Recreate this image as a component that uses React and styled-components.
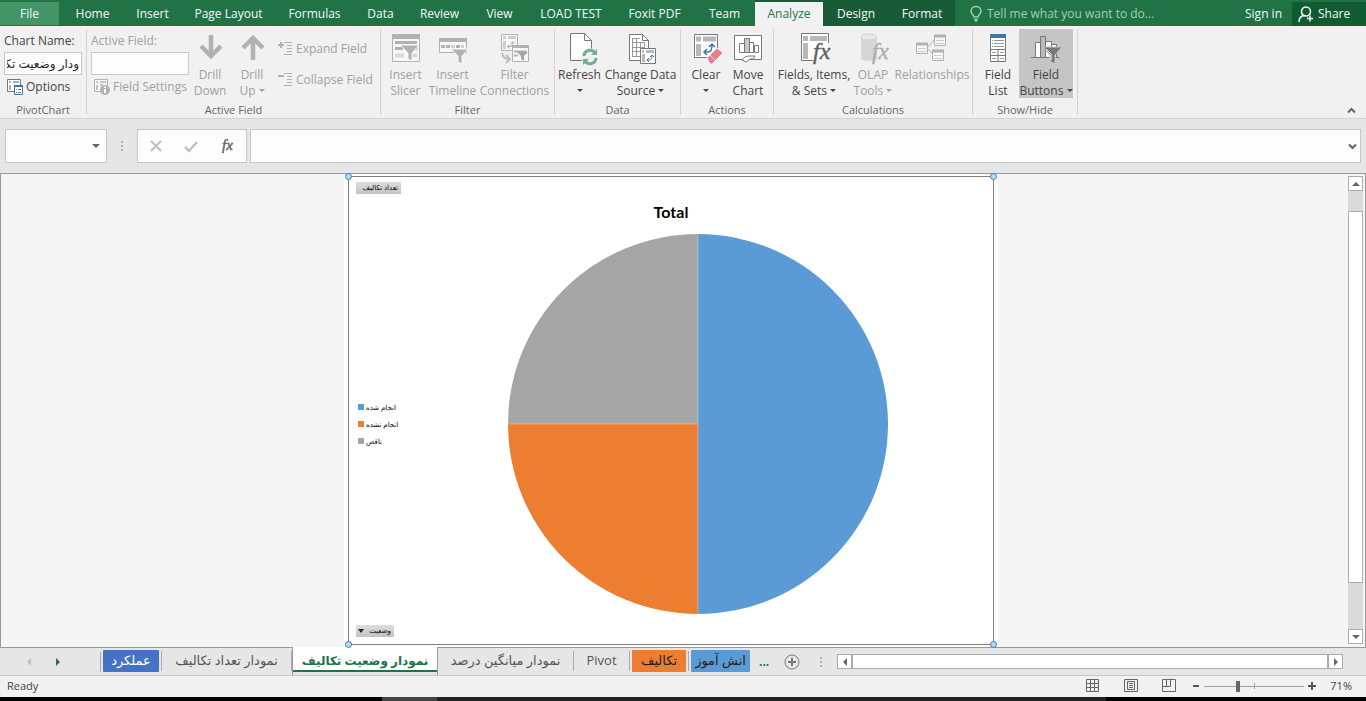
import styled, { createGlobalStyle } from 'styled-components';

const GlobalStyle = createGlobalStyle`
  * {
    box-sizing: border-box;
  }

  body {
    margin: 0;
    font-family: 'Open Sans', 'DejaVu Sans', sans-serif;
    font-size: 12px;
    line-height: 16px;
    color: #444;
  }

  button, input {
    margin: 0;
    padding: 0;
    border: 0;
    background: none;
    font: inherit;
    color: inherit;
  }

  svg {
    display: block;
    flex: none;
    overflow: visible;
  }
`;

const Page = styled.div`
  display: flex;
  flex-direction: column;
  min-height: 100vh;
  background-color: #e6e6e6;
`;

/* ---- tab strip ---- */

const TabStrip = styled.nav`
  display: flex;
  height: 26px;
  background-color: #217346;
  color: #f3f8f5;
`;

const FileTab = styled.button`
  width: 59px;
  margin: 2px 3px 1px 0;
  background-color: #439467;
`;

const RibbonTab = styled.button`
  width: ${({ $width }) => $width}px;
  padding-top: 2px;
  white-space: nowrap;
  background-color: ${({ $contextual }) => ($contextual ? '#185c37' : 'transparent')};

  &.active {
    border-top: 2px solid #185c37;
    padding-top: 0;
    background-color: #f1f1f1;
    background-clip: padding-box;
    color: #217346;
  }
`;

const TellMe = styled.label`
  display: flex;
  flex: 1;
  align-items: center;
  gap: 5px;
  padding: 2px 0 0 15px;
  color: #9fd0b3;

  input {
    flex: 1;
    min-width: 0;
    outline: none;
  }

  input::placeholder {
    color: #9fd0b3;
    opacity: 1;
  }
`;

const SignIn = styled.button`
  padding: 2px 10px 0;
`;

const Share = styled.button`
  display: flex;
  align-items: center;
  gap: 4px;
  width: 74px;
  margin-top: 2px;
  padding-left: 6px;
  background-color: #0e5c2f;
`;

/* ---- ribbon ---- */

const Ribbon = styled.div`
  display: flex;
  height: 93px;
  padding-top: 3px;
  border-bottom: 1px solid #d2d2d2;
  background-color: #f1f1f1;
`;

const Group = styled.section`
  display: flex;
  flex-direction: column;
  width: ${({ $width }) => $width}px;
  height: 86px;
  border-right: 1px solid #d2d2d2;
`;

const GroupBody = styled.div`
  display: flex;
  flex: none;
  justify-content: ${({ $align }) => $align || 'center'};
  height: 69px;
`;

const GroupName = styled.div`
  padding-top: 4px;
  text-align: center;
  font-size: 11px;
  color: #666;
`;

const BigButton = styled.button`
  display: flex;
  flex: none;
  flex-direction: column;
  align-items: center;
  gap: 2px;
  width: ${({ $width }) => $width}px;
  padding-top: 4px;
  white-space: nowrap;

  &:disabled {
    color: #a0a0a0;
  }

  &.pressed {
    background-color: #c5c5c5;
  }
`;

const Caret = styled.span`
  display: inline-block;
  margin: 0 0 3px;
  border: 3px solid transparent;
  border-top-color: currentColor;
  border-bottom: 0;
`;

const Stack = styled.div`
  display: flex;
  flex: none;
  flex-direction: column;
  width: ${({ $width }) => $width}px;
  padding: 4px 0 0 4px;
  gap: 2px;
  white-space: nowrap;
  color: ${({ $muted }) => ($muted ? '#a0a0a0' : '#444')};

  input {
    width: 100%;
    height: 23px;
    margin-top: 1px;
    padding: 0 2px;
    border: 1px solid #c6c6c6;
    background-color: #fdfdfd;
    color: #262626;
  }
`;

const SmallButton = styled.button`
  display: flex;
  align-items: center;
  gap: 3px;
  padding: 2px 0 0 3px;
  white-space: nowrap;

  &:disabled {
    color: #a0a0a0;
  }
`;

const ExpandStack = styled.div`
  display: flex;
  flex-direction: column;
  flex: 1;
  gap: 13px;
  padding: 10px 0 0 2px;
`;

const CollapseRibbon = styled.button`
  margin: auto 10px 3px auto;
`;

/* ---- formula bar ---- */

const FormulaBar = styled.div`
  display: flex;
  height: 54px;
  padding: 10px 5px;
`;

const Box = styled.div`
  display: flex;
  align-items: center;
  border: 1px solid #c6c6c6;
  background-color: #fdfdfd;
`;

const NameBox = styled(Box)`
  width: 102px;
  padding-right: 6px;

  input {
    width: 0;
    flex: 1;
    height: 100%;
  }
`;

const FormulaButtons = styled(Box)`
  justify-content: space-around;
  width: 110px;
  margin-right: 3px;
`;

const FormulaInput = styled(Box)`
  flex: 1;
  padding-right: 3px;

  input {
    flex: 1;
    height: 100%;
  }
`;

const Dots = styled.span`
  width: 2px;
  height: 10px;
  margin: ${({ $margin }) => $margin};
  background: repeating-linear-gradient(#b0b0b0 0 2px, transparent 2px 4px);
`;

/* ---- chart sheet ---- */

const Sheet = styled.main`
  display: flex;
  flex: 1;
  border: 1px solid #999;
  border-bottom: 0;
  background-color: #f5f5f5;
`;

const Canvas = styled.div`
  display: flex;
  flex: 1;
  justify-content: center;
  padding-right: 7px;
`;

const Paper = styled.div`
  display: flex;
  width: 654px;
  padding: 2px 4px;
  background-color: #fff;
`;

const ChartFrame = styled.div`
  position: relative;
  display: flex;
  flex: 1;
  flex-direction: column;
  align-items: flex-start;
  padding: 5px 7px 7px;
  border: 1px solid #7f7f7f;
`;

const Handle = styled.span`
  position: absolute;
  width: 7px;
  height: 7px;
  border: 1px solid #2f80c3;
  border-radius: 50%;
  background-color: #b5dcf8;
  ${({ $corner }) => $corner.split(' ').map((side) => `${side}: -4px;`).join(' ')}
`;

const PivotButton = styled.button`
  display: flex;
  align-items: center;
  justify-content: flex-end;
  gap: 4px;
  width: ${({ $width }) => $width}px;
  height: 12px;
  padding: 0 3px;
  background: linear-gradient(#dedede, #c2c2c2);
  font-size: 7px;
  line-height: 12px;
  white-space: nowrap;
  color: #000;
`;

const ChartTitle = styled.h1`
  align-self: center;
  margin: 8px 0 12px;
  font-family: Lato, sans-serif;
  font-size: 16px;
  font-weight: 700;
  line-height: 20px;
  color: #000;
`;

const Plot = styled.div`
  display: flex;
  align-items: center;
  width: 100%;
  margin-bottom: auto;

  > svg {
    margin: 0 auto;
  }
`;

const Legend = styled.ul`
  width: 54px;
  margin: 0;
  padding: 0 0 0 2px;
  list-style: none;
  font-size: 7px;
  line-height: 17px;
  white-space: nowrap;
  color: #000;
`;

const LegendItem = styled.li`
  display: flex;
  align-items: center;
  gap: 2px;

  &::before {
    content: '';
    width: 6px;
    height: 6px;
    background-color: ${({ $color }) => $color};
  }
`;

const VerticalScroll = styled.div`
  display: flex;
  flex-direction: column;
  width: 15px;
  margin: 2px 2px 3px 0;
  background-color: #dadada;
`;

const ScrollButton = styled.button`
  display: flex;
  align-items: center;
  justify-content: center;
  width: 15px;
  height: 15px;
  border: 1px solid #ababab;
  background-color: #fff;
`;

const ScrollThumb = styled.div`
  flex: 1;
  margin: ${({ $margin }) => $margin};
  border: 1px solid #ababab;
  background-color: #fff;
`;

/* ---- sheet tabs ---- */

const SheetBar = styled.div`
  display: flex;
  align-items: stretch;
  height: 29px;
  border-bottom: 1px solid #c6c6c6;
`;

const SheetNav = styled.div`
  display: flex;
  align-items: center;
  gap: 21px;
  width: 101px;
  padding-left: 25px;
  border-top: 1px solid #999;

  &::after {
    content: '';
    width: 1px;
    height: 20px;
    margin-left: auto;
    background-color: #ababab;
  }
`;

const SheetBarEnd = styled.div`
  display: flex;
  flex: 1;
  align-items: center;
  border-top: 1px solid #999;
`;

const SheetTab = styled.button`
  display: flex;
  width: ${({ $width }) => $width}px;
  padding: 2px 2px 3px;
  border-top: 1px solid #999;
  font-size: 13px;
  line-height: 21px;
  white-space: nowrap;

  span {
    flex: 1;
    height: 22px;
    border-radius: 1px;
    background-color: ${({ $color }) => $color || 'transparent'};
    color: ${({ $ink }) => $ink || '#555'};
  }

  &::after {
    content: '';
    width: 1px;
    height: 20px;
    margin: 1px -2px 0 2px;
    background-color: #ababab;
  }

  &.active {
    border: 1px solid #999;
    border-width: 0 1px;
    padding: 3px 0 2px;
    background: linear-gradient(#fff, #fff) top / 100% 23px no-repeat,
      linear-gradient(#217346, #217346) 0 23px / 100% 2px no-repeat;
    font-size: 12px;
    font-weight: 700;
  }

  &.active::after, &.last::after {
    display: none;
  }
`;

const MoreSheets = styled.b`
  width: 32px;
  padding-left: 7px;
  color: #217346;
`;

const HorizontalScroll = styled.div`
  display: flex;
  flex: 1;
  margin-right: 23px;
`;

/* ---- status bar ---- */

const StatusBar = styled.footer`
  display: flex;
  align-items: center;
  height: 21px;
  padding: 0 14px 1px 7px;
  background-color: #f1f1f1;
  font-size: 11px;
`;

const ViewButtons = styled.div`
  display: flex;
  gap: 24px;
  margin: 0 16px 0 auto;
`;

const ZoomSlider = styled.input`
  appearance: none;
  width: 100px;
  height: 12px;
  margin: 0 4px;
  background:
    linear-gradient(#a0a0a0, #a0a0a0) center / 100% 1px no-repeat,
    linear-gradient(#a0a0a0, #a0a0a0) center / 1px 6px no-repeat;

  &::-webkit-slider-thumb {
    appearance: none;
    width: 4px;
    height: 11px;
    background-color: #666;
  }
`;

const Percent = styled.span`
  width: 36px;
  text-align: right;
`;

const Taskbar = styled.div`
  height: 4px;
  background: linear-gradient(90deg, #000 28%, #444 28% 32%, #222 32% 81%, #000 81%);
`;

/* ---- icons ---- */

const Glyph = ({ size = 32, width = size, children }) => (
  <svg width={width} height={size} viewBox={`0 0 ${width} ${size}`} fill="none" stroke="#777" aria-hidden="true">
    {children}
  </svg>
);

const Triangle = ({ points, color = '#666' }) => (
  <svg width="8" height="8" viewBox="0 0 8 8" aria-hidden="true">
    <polygon points={points} fill={color} />
  </svg>
);

const UP = '0,6 4,2 8,6';
const DOWN = '0,2 8,2 4,6';
const LEFT = '6,0 2,4 6,8';
const RIGHT = '2,0 6,4 2,8';

const ArrowDownIcon = () => (
  <Glyph>
    <path d="M17 2v22M7 13l10 10 10-10" stroke="#b1b1b1" strokeWidth="4.500" />
  </Glyph>
);

const ArrowUpIcon = () => (
  <Glyph>
    <path d="M17 27V5M7 15l10-10 10 10" stroke="#b1b1b1" strokeWidth="4.500" />
  </Glyph>
);

const SlicerIcon = () => (
  <Glyph>
    <path d="M2.5 1.5h27v27h-27z" fill="#f7f7f7" stroke="#b1b1b1" />
    <path d="M2 1h28v5H2z" fill="#b1b1b1" stroke="none" />
    <path d="M5 9.500h22M5 15.500h8" stroke="#b1b1b1" strokeWidth="3" />
    <path d="M5 22.500h9M22 22.500h5M25 15.500h3" stroke="#dcd8dc" strokeWidth="4" />
    <path d="M10 12h19l-7 8v8l-4-2v-6z" fill="#b1b1b1" stroke="#f7f7f7" />
  </Glyph>
);

const TimelineIcon = () => (
  <Glyph>
    <path d="M2.500 5.500h27v14h-27z" fill="#f7f7f7" stroke="#b1b1b1" />
    <path d="M2 5h28v4H2z" fill="#b1b1b1" stroke="none" />
    <path d="M4 13.500h4M9 13.500h4M19 13.500h4" stroke="#b1b1b1" strokeWidth="3" />
    <path d="M14 13.500h4M24 13.500h3" stroke="#d4d0d4" strokeWidth="3" />
    <path d="M14 16h17l-6 7v8l-4-2v-6z" fill="#b1b1b1" stroke="#f7f7f7" />
  </Glyph>
);

const ConnectionsIcon = () => (
  <Glyph>
    <path d="M2.500 1.500h16v16h-16z" fill="#f7f7f7" stroke="#b1b1b1" />
    <path d="M4 4.500h3M9 4.500h8M5.500 8v8" stroke="#d0ccd0" strokeWidth="3" />
    <path d="M9 13.500h3l2-4M8.500 13.500l2-2m-2 2l2 2M14 8.500l-2 2m2-2l2 2" stroke="#a8a4a8" />
    <path d="M3 20c1 5 3 6 8 6M7 22l4 4-4 4" stroke="#c0bcc0" strokeWidth="2" />
    <path d="M13.500 12.500h16v16h-16z" fill="#f7f7f7" stroke="#b1b1b1" />
    <path d="M13 12h17v3H13z" fill="#b1b1b1" stroke="none" />
    <path d="M15 18.500h13M15 22.500h4" stroke="#b1b1b1" strokeWidth="2" />
    <path d="M18 19h11l-4 4v5l-3-2v-3z" fill="#a5a1a5" stroke="none" />
  </Glyph>
);

const RefreshIcon = () => (
  <Glyph>
    <path d="M6.500 .5h14l7 7v20h-21z" fill="#fff" />
    <path d="M20.500 .5v7h7" />
    <circle cx="26" cy="24" r="9" fill="#f1f1f1" stroke="none" />
    <path d="M20 23a6 6 0 0 1 11-3M32 25a6 6 0 0 1-11 3" stroke="#6fae8f" strokeWidth="3" />
    <path d="M33 16v6h-6zM19 32v-6h6z" fill="#6fae8f" stroke="none" />
  </Glyph>
);

const ChangeSourceIcon = () => (
  <Glyph>
    <path d="M4.500 1.500h13l6 6v20h-19z" fill="#fff" />
    <path d="M17.500 1.500v6h6" />
    <path d="M7.500 5v19M11.500 5v19M15.500 9v9M19.500 9v5M7 5.500h8M7 9.500h13M7 14.500h13M7 18.500h8M7 23.500h8" stroke="#999" />
    <path d="M15.500 15.500h15v15h-15z" fill="#fff" />
    <path d="M17 18.500h2M21 18.500h8M18.500 21v8" stroke="#b8b8b8" strokeWidth="3" />
    <path d="M22 27h2c2 0 3-2 3-4M24 25l-2 2 2 2M25 24l2-2 2 2" stroke="#3b78ad" />
  </Glyph>
);

const ClearIcon = () => (
  <Glyph>
    <path d="M4.500 1.500h23v23h-23z" fill="#fff" />
    <path d="M6 6h5M13 6h13M8.500 11v12" stroke="#b8b8b8" strokeWidth="5" />
    <path d="M14 19h4c3 0 4-3 4-7M17 16l-3 3 3 3M19 14l3-3 3 3" stroke="#3b78ad" strokeWidth="1.500" />
    <path d="M17 25L27 15l6 5-11 11h-2z" fill="#e77f92" stroke="#f1f1f1" />
    <path d="M20 22l5 5" stroke="#f7d0d6" />
  </Glyph>
);

const MoveChartIcon = () => (
  <Glyph>
    <path d="M2.500 2.500h27v24h-27z" fill="#fff" />
    <path d="M7.500 10.500h5v9h-5zM17.500 9.500h4v10h-4zM22.500 12.500h4v7h-4z" fill="#fff" />
    <path d="M12.500 5.500h5v14h-5z" fill="#c8c8c8" />
    <path d="M10 27c2-3 4-4 8-4h5l-2 3h-3l-4 3z" fill="#fff" />
  </Glyph>
);

const FormulaText = ({ x, y, size, color = '#5f5f5f' }) => (
  <text x={x} y={y} fill={color} stroke={color} strokeWidth=".4" fontFamily="'Liberation Serif', serif" fontStyle="italic" fontSize={size}>
    fx
  </text>
);

const FieldsIcon = () => (
  <Glyph width={34}>
    <path d="M4.500 .5h27v27h-27z" fill="#fff" />
    <path d="M6 5.500h5M13 5.500h17M8.500 10v16" stroke="#b8b8b8" strokeWidth="5" />
    <path d="M16 28h16V10" stroke="#f1f1f1" strokeWidth="2" />
    <FormulaText x="16" y="26" size="24" />
  </Glyph>
);

const OlapIcon = () => (
  <Glyph width={34}>
    <path d="M5 4v21c0 4 16 4 16 0V4z" fill="#d6d6d6" stroke="none" />
    <ellipse cx="13" cy="4" rx="8" ry="3" fill="#e8e8e8" stroke="#d0d0d0" />
    <FormulaText x="16" y="26" size="23" color="#adadad" />
  </Glyph>
);

const RelationshipsIcon = () => (
  <Glyph>
    <path d="M12 14l7-8M12 16l6 6" stroke="#b1b1b1" />
    <path d="M.5 10.500h11v10h-11zM18.500 2.500h11v10h-11zM16.500 17.500h11v10h-11z" fill="#f7f7f7" stroke="#b1b1b1" />
    <path d="M0 11h12M18 3h12M16 18h12" stroke="#b1b1b1" strokeWidth="3" />
    <path d="M2 15.500h8M2 18.500h8M20 7.500h8M20 10.500h8M18 22.500h8M18 25.500h8" stroke="#ccc" />
  </Glyph>
);

const FieldListIcon = () => (
  <Glyph>
    <path d="M8.500 1.500h15v27h-15z" fill="#fff" />
    <path d="M8 1h16v4H8z" fill="#3b78ad" stroke="none" />
    <path d="M10 7.500h1M12 7.500h10M10 10.500h1M12 10.500h10M10 13.500h1M12 13.500h10" stroke="#999" />
    <path d="M8 16.500h16M16 16.500v12M8 22.500h16" />
    <path d="M10 19.500h4M18 19.500h4M10 25.500h4M18 25.500h4" stroke="#999" />
  </Glyph>
);

const FieldButtonsIcon = () => (
  <Glyph>
    <path d="M1 24.500h28" />
    <path d="M5.500 9.500h5v15h-5zM15.500 8.500h6v16h-6zM21.500 11.500h5v13h-5z" fill="#fff" />
    <path d="M10.500 3.500h5v21h-5z" fill="#bbb" />
    <path d="M13 14h19l-7 8v9l-5-3v-6z" fill="#777" stroke="#c5c5c5" />
    <path d="M16 16l5 5v6" stroke="#fff" />
  </Glyph>
);

const OptionsIcon = () => (
  <Glyph size={16}>
    <path d="M.5 .5h13v12H.5z" fill="#fff" />
    <path d="M2 3h2M6 3h6M3 6v5" stroke="#b0b0b0" strokeWidth="2" />
    <path d="M7.500 6.500h8v9h-8z" fill="#fff" stroke="#3b78ad" />
    <path d="M7 7h9" stroke="#3b78ad" strokeWidth="2" />
    <path d="M9 10.500h1M11 10.500h3M9 13.500h1M11 13.500h3" />
  </Glyph>
);

const SettingsIcon = () => (
  <Glyph size={16}>
    <path d="M.5 .5h13v12H.5z" fill="#f7f7f7" stroke="#b1b1b1" />
    <path d="M2 3h2M6 3h6M3 6v5M6 6h3" stroke="#c4c4c4" strokeWidth="2" />
    <circle cx="11" cy="11" r="5" fill="#b1b1b1" stroke="none" />
    <path d="M11 7.500v1.500M11 10v4" stroke="#fff" strokeWidth="2" />
  </Glyph>
);

const ExpandIcon = ({ plus }) => (
  <Glyph size={16} width={15}>
    <path d={plus ? 'M0 4h6M3 1v6' : 'M0 4h6'} stroke="#b1b1b1" strokeWidth="2" />
    <path d="M6 1.500h8M9 4.500h5M9 7.500h5M9 10.500h5M6 13.500h8" stroke="#b1b1b1" />
  </Glyph>
);

const BulbIcon = () => (
  <svg width="12" height="16" viewBox="0 0 12 16" fill="none" stroke="#9fd0b3" strokeWidth="1.500" aria-hidden="true">
    <path d="M4 11c0-2-3-3-3-6a5 4.500 0 0 1 10 0c0 3-3 4-3 6zM4 13.500h4M5 15h2" />
  </svg>
);

const PersonIcon = () => (
  <svg width="16" height="16" viewBox="0 0 16 16" fill="none" stroke="#fff" strokeWidth="1.500" aria-hidden="true">
    <circle cx="8" cy="5.500" r="4.500" />
    <path d="M1 16c0-4 2-6 5-6.500M9 12.500h6M12 9.500v6" />
  </svg>
);

const NormalViewIcon = () => (
  <Glyph size={14}>
    <path d="M.5 .5h12v12H.5zM4.500 .5v12M8.500 .5v12M.5 4.500h12M.5 8.500h12" stroke="#666" />
  </Glyph>
);

const PageViewIcon = () => (
  <Glyph size={14}>
    <path d="M.5 .5h13v12H.5zM3.500 2.500h7v8h-7zM5 4.500h4M5 6.500h4M5 8.500h4" stroke="#666" />
  </Glyph>
);

const BreakViewIcon = () => (
  <Glyph size={14}>
    <path d="M.5 .5h13v12H.5zM4.500 .5v7M8.500 .5v7M.5 7.500h8" stroke="#666" />
  </Glyph>
);

/* ---- data ---- */

const tabs = [
  ['Home', 61],
  ['Insert', 59],
  ['Page Layout', 93],
  ['Formulas', 79],
  ['Data', 53],
  ['Review', 65],
  ['View', 55],
  ['LOAD TEST', 88],
  ['Foxit PDF', 79],
  ['Team', 61],
  ['Analyze', 68, true],
  ['Design', 66, true],
  ['Format', 66, true],
];

const groups = [
  {
    name: 'Filter',
    width: 174,
    buttons: [
      { lines: ['Insert', 'Slicer'], width: 46, icon: SlicerIcon, disabled: true },
      { lines: ['Insert', 'Timeline'], width: 48, icon: TimelineIcon, disabled: true },
      { lines: ['Filter', 'Connections'], width: 76, icon: ConnectionsIcon, disabled: true },
    ],
  },
  {
    name: 'Data',
    width: 126,
    buttons: [
      { lines: ['Refresh', ''], width: 46, icon: RefreshIcon, caret: true },
      { lines: ['Change Data', 'Source'], width: 76, icon: ChangeSourceIcon, caret: true },
    ],
  },
  {
    name: 'Actions',
    width: 93,
    buttons: [
      { lines: ['Clear', ''], width: 42, icon: ClearIcon, caret: true },
      { lines: ['Move', 'Chart'], width: 42, icon: MoveChartIcon },
    ],
  },
  {
    name: 'Calculations',
    width: 199,
    buttons: [
      { lines: ['Fields, Items,', '& Sets'], width: 76, icon: FieldsIcon, caret: true },
      { lines: ['OLAP', 'Tools'], width: 42, icon: OlapIcon, caret: true, disabled: true },
      { lines: ['Relationships', ''], width: 76, icon: RelationshipsIcon, disabled: true },
    ],
  },
  {
    name: 'Show/Hide',
    width: 105,
    buttons: [
      { lines: ['Field', 'List'], width: 42, icon: FieldListIcon },
      { lines: ['Field', 'Buttons'], width: 54, icon: FieldButtonsIcon, caret: true, pressed: true },
    ],
  },
];

const legend = [
  ['انجام شده', '#5b9bd5'],
  ['انجام نشده', '#ed7d31'],
  ['ناقص', '#a5a5a5'],
];

const sheets = [
  { name: 'عملکرد', width: 61, color: '#4472c4', ink: '#fff' },
  { name: 'نمودار تعداد تکالیف', width: 130 },
  { name: 'نمودار وضعیت تکالیف', width: 146, ink: '#217346', state: 'active' },
  { name: 'نمودار میانگین درصد', width: 136 },
  { name: 'Pivot', width: 56 },
  { name: 'تکالیف', width: 59, color: '#ed7d31', ink: '#222' },
  { name: 'انش آموز', width: 63, color: '#5b9bd5', ink: '#222', state: 'last' },
];

const RibbonButton = ({ lines, width, icon: Icon, caret, disabled, pressed }) => (
  <BigButton $width={width} disabled={disabled} className={pressed ? 'pressed' : undefined}>
    <Icon />
    <span>
      {lines[0]}
      <br />
      {lines[1]} {caret && <Caret />}
    </span>
  </BigButton>
);

const App = () => {
  return (
    <Page>
      <GlobalStyle />

      <TabStrip>
        <FileTab>File</FileTab>
        {tabs.map(([name, width, contextual]) => (
          <RibbonTab key={name} $width={width} $contextual={contextual} className={name === 'Analyze' ? 'active' : undefined}>
            {name}
          </RibbonTab>
        ))}
        <TellMe>
          <BulbIcon />
          <input aria-label="Tell me" placeholder="Tell me what you want to do..." />
        </TellMe>
        <SignIn>Sign in</SignIn>
        <Share>
          <PersonIcon />
          Share
        </Share>
      </TabStrip>

      <Ribbon>
        <Group $width={87}>
          <GroupBody $align="flex-start">
            <Stack $width={82}>
              <label htmlFor="chart-name">Chart Name:</label>
              <input id="chart-name" dir="rtl" defaultValue="ودار وضعیت تکا" />
              <SmallButton>
                <OptionsIcon />
                Options
              </SmallButton>
            </Stack>
          </GroupBody>
          <GroupName>PivotChart</GroupName>
        </Group>

        <Group $width={294}>
          <GroupBody $align="flex-start">
            <Stack $width={102} $muted>
              <label htmlFor="active-field">Active Field:</label>
              <input id="active-field" />
              <SmallButton disabled>
                <SettingsIcon />
                Field Settings
              </SmallButton>
            </Stack>
            <RibbonButton lines={['Drill', 'Down']} width={42} icon={ArrowDownIcon} disabled />
            <RibbonButton lines={['Drill', 'Up']} width={42} icon={ArrowUpIcon} caret disabled />
            <ExpandStack>
              <SmallButton disabled>
                <ExpandIcon plus />
                Expand Field
              </SmallButton>
              <SmallButton disabled>
                <ExpandIcon />
                Collapse Field
              </SmallButton>
            </ExpandStack>
          </GroupBody>
          <GroupName>Active Field</GroupName>
        </Group>

        {groups.map((group) => (
          <Group key={group.name} $width={group.width}>
            <GroupBody>
              {group.buttons.map((button) => (
                <RibbonButton key={button.lines.join(' ')} {...button} />
              ))}
            </GroupBody>
            <GroupName>{group.name}</GroupName>
          </Group>
        ))}

        <CollapseRibbon aria-label="Collapse the ribbon">
          <Glyph size={9}>
            <path d="M1 6.500l3.500-3.500 3.500 3.500" stroke="#666" strokeWidth="2" />
          </Glyph>
        </CollapseRibbon>
      </Ribbon>

      <FormulaBar>
        <NameBox>
          <input aria-label="Name box" />
          <Triangle points={DOWN} />
        </NameBox>
        <Dots $margin="12px 14px" />
        <FormulaButtons>
          <button aria-label="Cancel">
            <Glyph size={14}>
              <path d="M2 2l10 10M12 2L2 12" stroke="#c0c0c0" strokeWidth="2" />
            </Glyph>
          </button>
          <button aria-label="Enter">
            <Glyph size={14}>
              <path d="M1 8l4 4 8-9" stroke="#c0c0c0" strokeWidth="2.500" />
            </Glyph>
          </button>
          <button aria-label="Insert function">
            <Glyph size={20} width={16}>
              <FormulaText x="3" y="14" size="15" />
            </Glyph>
          </button>
        </FormulaButtons>
        <FormulaInput>
          <input aria-label="Formula" />
          <Glyph size={9}>
            <path d="M1 2.500l3.500 3.500 3.500-3.500" stroke="#666" strokeWidth="2" />
          </Glyph>
        </FormulaInput>
      </FormulaBar>

      <Sheet>
        <Canvas>
          <Paper>
            <ChartFrame>
              <Handle $corner="top left" />
              <Handle $corner="top right" />
              <Handle $corner="bottom left" />
              <Handle $corner="bottom right" />
              <PivotButton $width={45}>تعداد تکالیف</PivotButton>
              <ChartTitle>Total</ChartTitle>
              <Plot>
                <Legend>
                  {legend.map(([name, color]) => (
                    <LegendItem key={name} $color={color}>
                      {name}
                    </LegendItem>
                  ))}
                </Legend>
                <svg width="380" height="380" viewBox="-190 -190 380 380" role="img" aria-label="Total">
                  <path d="M0 0V-190A190 190 0 0 1 0 190z" fill="#5b9bd5" />
                  <path d="M0 0V190A190 190 0 0 1 -190 0z" fill="#ed7d31" />
                  <path d="M0 0H-190A190 190 0 0 1 0 -190z" fill="#a5a5a5" />
                  <path d="M0 -190V190M-190 0H0" stroke="#fff" strokeOpacity=".4" strokeWidth=".8" />
                </svg>
              </Plot>
              <PivotButton $width={38}>
                <Triangle points="1,2 7,2 4,6" color="#222" />
                وضعیت
              </PivotButton>
            </ChartFrame>
          </Paper>
        </Canvas>
        <VerticalScroll>
          <ScrollButton aria-label="Scroll up">
            <Triangle points={UP} />
          </ScrollButton>
          <ScrollThumb $margin="20px 0 46px" />
          <ScrollButton aria-label="Scroll down">
            <Triangle points={DOWN} />
          </ScrollButton>
        </VerticalScroll>
      </Sheet>

      <SheetBar>
        <SheetNav>
          <Triangle points={LEFT} color="#c0c0c0" />
          <Triangle points={RIGHT} color="#217346" />
        </SheetNav>
        {sheets.map(({ name, width, color, ink, state }) => (
          <SheetTab key={name} $width={width} $color={color} $ink={ink} className={state}>
            <span>{name}</span>
          </SheetTab>
        ))}
        <SheetBarEnd>
          <MoreSheets>...</MoreSheets>
          <Glyph size={16}>
            <circle cx="8" cy="8" r="7" />
            <path d="M4 8h8M8 4v8" strokeWidth="2" />
          </Glyph>
          <Dots $margin="0 15px 0 20px" />
          <HorizontalScroll>
            <ScrollButton aria-label="Scroll left">
              <Triangle points={LEFT} />
            </ScrollButton>
            <ScrollThumb $margin="0" />
            <ScrollButton aria-label="Scroll right">
              <Triangle points={RIGHT} />
            </ScrollButton>
          </HorizontalScroll>
        </SheetBarEnd>
      </SheetBar>

      <StatusBar>
        Ready
        <ViewButtons>
          <button aria-label="Normal">
            <NormalViewIcon />
          </button>
          <button aria-label="Page layout">
            <PageViewIcon />
          </button>
          <button aria-label="Page break preview">
            <BreakViewIcon />
          </button>
        </ViewButtons>
        <button aria-label="Zoom out">
          <Glyph size={8}>
            <path d="M1 4h6" stroke="#555" strokeWidth="2" />
          </Glyph>
        </button>
        <ZoomSlider type="range" aria-label="Zoom" defaultValue="33" />
        <button aria-label="Zoom in">
          <Glyph size={8}>
            <path d="M0 4h8M4 0v8" stroke="#555" strokeWidth="2" />
          </Glyph>
        </button>
        <Percent>71%</Percent>
      </StatusBar>
      <Taskbar />
    </Page>
  );
};

export default App;
